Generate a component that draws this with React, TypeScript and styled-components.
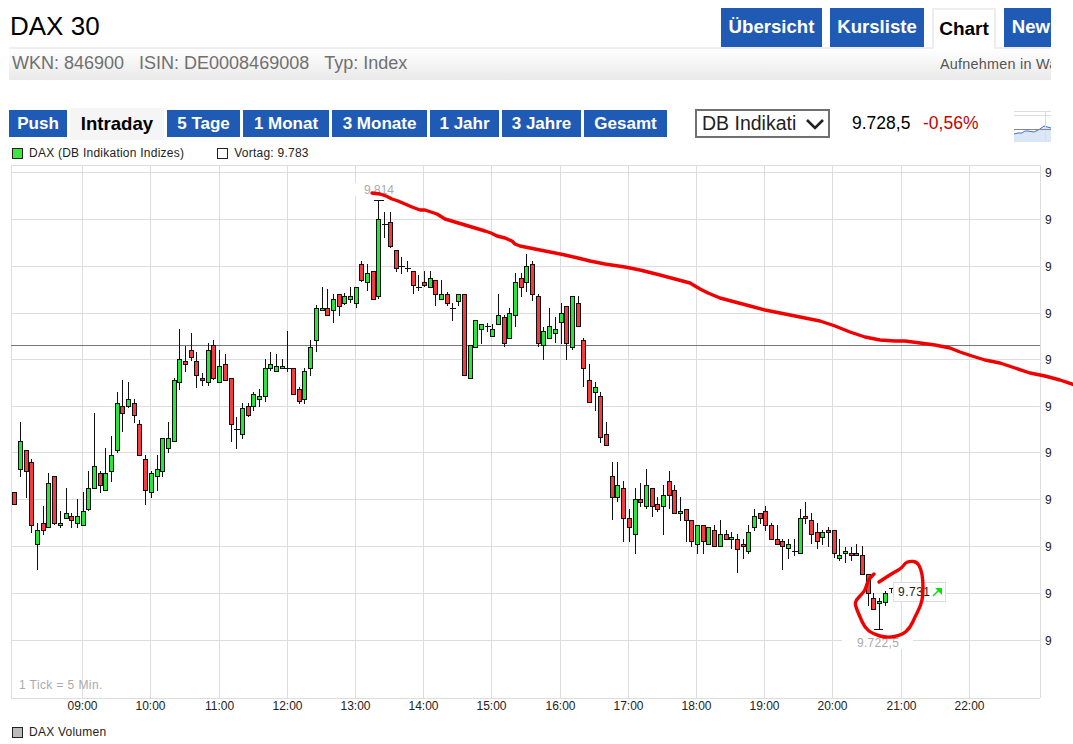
import React from "react";
import styled, { createGlobalStyle } from "styled-components";

const GlobalStyle = createGlobalStyle`
  html, body {
    margin: 0;
    padding: 0;
    height: 744px;
    overflow: hidden;
    background: #fff;
    font-family: "Liberation Sans", Arial, sans-serif;
  }
`;

const Page = styled.div`
  width: 1073px;
  height: 744px;
  overflow: hidden;
`;

const Top = styled.div`
  width: 1042px;
  margin-left: 9px;
  overflow: hidden;
`;

const Header = styled.div`
  display: flex;
  align-items: flex-end;
  height: 47px;
`;

const Title = styled.h1`
  flex: 0 0 711px;
  align-self: flex-start;
  margin: 11px 0 0 1px;
  font-size: 26px;
  line-height: 30px;
  font-weight: 400;
  color: #000;
`;

const TabList = styled.div`
  display: flex;
  flex: none;
  align-items: flex-end;
  gap: 8px;
`;

const Tab = styled.div<{ $active?: boolean; $w: number }>`
  width: ${(p) => p.$w}px;
  height: ${(p) => (p.$active ? 41 : 39)}px;
  box-sizing: border-box;
  flex: none;
  text-align: center;
  font-size: ${(p) => (p.$active ? 19 : 18.6)}px;
  font-weight: 700;
  line-height: 38px;
  white-space: nowrap;
  color: ${(p) => (p.$active ? "#000" : "#fff")};
  background: ${(p) => (p.$active ? "#fff" : "#1f5bb5")};
  border: ${(p) => (p.$active ? "2px solid #eee" : "none")};
  border-bottom: none;
  margin-bottom: ${(p) => (p.$active ? -2 : 0)}px;
  position: relative;
`;

const InfoBar = styled.div`
  display: flex;
  justify-content: space-between;
  align-items: center;
  box-sizing: content-box;
  height: 29px;
  padding: 0 0 2px 3px;
  border-top: 2px solid #eee;
  background: linear-gradient(#fff, #e9e9e9);
`;

const InfoText = styled.span`
  font-size: 18px;
  color: #707070;
  margin-right: 15px;
`;

const WatchLink = styled.span`
  flex: none;
  width: 111px;
  overflow: hidden;
  white-space: nowrap;
  font-size: 14.4px;
  letter-spacing: 0.25px;
  color: #555;
`;

const Controls = styled.div`
  display: flex;
  align-items: center;
  height: 27px;
  margin-top: 30px;
`;

const RangeButton = styled.div<{ $active?: boolean; $w: number }>`
  width: ${(p) => p.$w}px;
  flex: none;
  margin-right: 3px;
  height: ${(p) => (p.$active ? 32 : 27)}px;
  line-height: ${(p) => (p.$active ? 31 : 27)}px;
  text-align: center;
  font-size: ${(p) => (p.$active ? 18.6 : 17)}px;
  font-weight: 700;
  white-space: nowrap;
  color: ${(p) => (p.$active ? "#000" : "#fff")};
  background: ${(p) => (p.$active ? "#f5f5f5" : "#1f5bb5")};
`;

const Market = styled.div`
  display: flex;
  align-items: center;
  justify-content: space-between;
  box-sizing: border-box;
  flex: none;
  width: 135px;
  height: 29px;
  margin-left: 25px;
  padding: 0 3px 0 5px;
  border: 2px solid #707070;
  font-size: 19.5px;
  color: #222;
`;

const Price = styled.span`
  flex: none;
  margin-left: 22px;
  font-size: 17.5px;
  color: #000;
  width: 71px;
`;

const Change = styled.span`
  flex: none;
  font-size: 17.5px;
  color: #c80000;
  width: 91px;
`;

const Legend = styled.div`
  display: flex;
  align-items: center;
  height: 14px;
  margin: 9px 0 0 3px;
  font-size: 12px;
  letter-spacing: 0.24px;
  color: #222;
`;

const Swatch = styled.i<{ $color: string }>`
  width: 9px;
  height: 9px;
  flex: none;
  margin-right: 6px;
  border: 1px solid #222;
  background: ${(p) => p.$color};
`;

const LegendLabel = styled.span`
  margin-right: 33px;
`;

const Plot = styled.svg`
  display: block;
  width: 1073px;
  height: 560px;
`;

const AxisLabel = styled.text<{ $spacing?: number }>`
  font-size: 12px;
  fill: #222;
  letter-spacing: ${(p) => p.$spacing ?? 0}px;
`;

const MutedLabel = styled.text<{ $spacing?: number }>`
  font-size: 12px;
  fill: #aaa;
  letter-spacing: ${(p) => p.$spacing ?? 0}px;
`;

const VolumeLegend = styled(Legend)`
  margin: 5px 0 0 12px;
`;

type Kind = "g" | "r" | "d";
// wick top, body top, body bottom, wick bottom, kind (page y values)
type Candle = [number, number, number, number, Kind];

const candles: Candle[] = [
  [492, 492, 504, 504, "r"], [422, 441, 469, 477, "g"], [450, 450, 471, 498, "r"], [459, 462, 525, 533, "r"],
  [523, 530, 544, 570, "g"], [506, 523, 530, 535, "r"], [473, 483, 527, 527, "g"], [476, 476, 523, 525, "r"],
  [511, 523, 525, 528, "g"], [488, 513, 518, 518, "g"], [513, 516, 520, 528, "r"], [499, 516, 523, 528, "g"],
  [492, 511, 525, 525, "g"], [471, 488, 509, 511, "g"], [413, 466, 488, 488, "g"], [471, 473, 485, 493, "r"],
  [448, 473, 490, 490, "g"], [436, 455, 471, 482, "g"], [392, 403, 450, 453, "g"], [380, 406, 413, 432, "r"],
  [382, 399, 406, 408, "g"], [399, 403, 415, 423, "r"], [420, 424, 455, 455, "r"], [455, 459, 490, 505, "r"],
  [471, 473, 492, 498, "g"], [455, 469, 476, 491, "g"], [438, 438, 471, 477, "g"], [422, 438, 448, 453, "g"],
  [378, 380, 441, 441, "g"], [329, 359, 382, 390, "g"], [346, 361, 364, 372, "r"], [333, 350, 357, 361, "r"],
  [352, 361, 375, 388, "r"], [373, 378, 380, 386, "r"], [343, 350, 382, 386, "g"], [340, 345, 378, 380, "r"],
  [350, 366, 382, 382, "g"], [354, 364, 380, 380, "r"], [378, 378, 424, 442, "r"], [417, 429, 429, 449, "d"],
  [403, 408, 434, 439, "g"], [403, 406, 415, 417, "r"], [392, 394, 406, 411, "g"], [389, 396, 399, 407, "g"],
  [359, 368, 396, 402, "g"], [352, 364, 368, 371, "g"], [354, 366, 371, 371, "g"], [359, 366, 368, 368, "g"],
  [331, 368, 368, 372, "d"], [368, 368, 394, 394, "r"], [387, 389, 401, 404, "r"], [368, 371, 399, 404, "g"],
  [340, 347, 368, 376, "g"], [305, 308, 340, 352, "g"], [287, 308, 310, 310, "g"], [289, 308, 315, 315, "r"],
  [294, 299, 310, 323, "g"], [294, 294, 306, 316, "r"], [293, 296, 303, 305, "g"], [287, 296, 299, 303, "g"],
  [287, 287, 303, 308, "g"], [261, 264, 280, 282, "r"], [264, 273, 282, 291, "g"], [271, 271, 299, 299, "r"],
  [200, 219, 296, 299, "g"], [212, 224, 224, 238, "d"], [212, 222, 246, 248, "r"], [250, 250, 268, 272, "r"],
  [257, 266, 266, 274, "d"], [261, 268, 268, 272, "d"], [271, 271, 285, 294, "r"], [275, 287, 287, 291, "d"],
  [271, 282, 285, 287, "r"], [271, 278, 287, 287, "g"], [280, 280, 294, 306, "r"], [280, 294, 299, 299, "g"],
  [292, 294, 303, 306, "r"], [303, 308, 308, 321, "d"], [294, 294, 301, 306, "g"], [294, 294, 375, 375, "r"],
  [345, 345, 378, 378, "g"], [320, 320, 347, 347, "g"], [324, 324, 329, 344, "g"], [323, 326, 326, 332, "d"],
  [324, 329, 336, 336, "g"], [294, 315, 324, 324, "g"], [315, 317, 343, 347, "r"], [308, 313, 338, 338, "g"],
  [273, 282, 315, 327, "g"], [273, 278, 287, 297, "r"], [254, 266, 282, 292, "g"], [261, 264, 294, 301, "r"],
  [294, 296, 343, 347, "r"], [327, 331, 345, 360, "g"], [308, 326, 338, 338, "g"], [317, 329, 333, 343, "g"],
  [303, 313, 322, 344, "g"], [306, 306, 343, 360, "r"], [296, 296, 347, 350, "g"], [296, 303, 326, 326, "r"],
  [338, 340, 368, 387, "r"], [364, 380, 402, 402, "r"], [382, 387, 392, 411, "g"], [392, 396, 437, 443, "r"],
  [422, 434, 445, 445, "r"], [462, 476, 497, 520, "r"], [462, 485, 497, 502, "g"], [481, 488, 518, 542, "r"],
  [509, 518, 527, 542, "r"], [488, 499, 534, 554, "g"], [483, 499, 502, 507, "r"], [469, 485, 506, 509, "g"],
  [488, 488, 506, 517, "r"], [497, 504, 509, 512, "r"], [485, 495, 506, 535, "g"], [471, 481, 495, 509, "r"],
  [485, 490, 513, 513, "r"], [497, 511, 513, 521, "g"], [509, 509, 520, 542, "r"], [520, 520, 541, 547, "r"],
  [525, 525, 544, 554, "g"], [525, 525, 541, 554, "r"], [527, 527, 544, 544, "g"], [525, 530, 546, 546, "r"],
  [520, 534, 546, 546, "g"], [530, 534, 539, 539, "r"], [532, 537, 539, 549, "g"], [534, 539, 549, 573, "r"],
  [539, 544, 546, 559, "r"], [525, 532, 551, 554, "g"], [509, 516, 527, 531, "g"], [513, 513, 518, 524, "r"],
  [506, 511, 525, 531, "r"], [523, 525, 539, 539, "r"], [525, 539, 544, 544, "r"], [539, 541, 546, 570, "r"],
  [539, 544, 548, 559, "g"], [539, 551, 551, 556, "d"], [509, 518, 553, 553, "g"], [502, 516, 518, 524, "r"],
  [513, 520, 534, 544, "r"], [523, 532, 541, 549, "r"], [530, 532, 537, 545, "g"], [527, 530, 532, 547, "r"],
  [530, 530, 553, 558, "r"], [539, 555, 558, 561, "g"], [547, 551, 553, 563, "g"], [547, 553, 555, 561, "r"],
  [544, 553, 555, 555, "r"], [546, 555, 574, 574, "r"], [574, 574, 593, 606, "r"], [593, 598, 609, 609, "r"],
  [598, 601, 603, 629, "g"], [591, 593, 602, 606, "g"], [588, 588, 588, 593, "d"],
];

const candleX = (i: number) => Math.round(14.3 + 5.69 * i);

const vLines = [11, 82, 150, 219, 287, 355, 423, 491, 560, 628, 696, 764, 832, 901, 969, 1040];
const hLines = [172, 219, 266, 313, 359, 406, 452, 499, 546, 593, 640];
const hours = ["09:00", "10:00", "11:00", "12:00", "13:00", "14:00", "15:00", "16:00", "17:00", "18:00", "19:00", "20:00", "21:00", "22:00"];

const trendLine =
  "372,193 380,194 386,196 392,199 398,201 405,204 412,207 420,210 425,210 431,212 437,214 445,219 455,222 465,225 475,228 485,231 491,233 497,236 505,238 512,241 515,244 520,246 530,248 540,250 550,252 565,255 578,258 590,261 605,264 625,267 640,270 660,275 675,279 690,283 700,289 708,293 720,298 735,302 750,306 765,310 780,313 800,317 820,321 835,326 850,332 865,337 880,340 895,341 905,341 920,343 935,345 950,348 960,352 972,356 985,360 1000,363 1015,368 1030,373 1045,376 1060,380 1075,385";

const circleLine = [
  [879, 582], [885, 578], [893, 573], [902, 568], [905, 563], [910, 561], [917, 562], [921, 569], [923, 580],
  [923, 595], [921, 605], [915, 617], [910, 628], [902, 635], [887, 638], [873, 634], [865, 628], [860, 617],
  [855, 605], [856, 600], [863, 593], [866, 588], [868, 580], [874, 574],
];

// rounds the hand drawn stroke through the midpoints of its segments
const smoothPath = (pts: number[][]) => {
  let d = `M${pts[0][0]} ${pts[0][1]}`;
  for (let i = 1; i < pts.length - 1; i++) {
    const mx = (pts[i][0] + pts[i + 1][0]) / 2;
    const my = (pts[i][1] + pts[i + 1][1]) / 2;
    d += ` Q${pts[i][0]} ${pts[i][1]} ${mx} ${my}`;
  }
  const last = pts[pts.length - 1];
  return `${d} L${last[0]} ${last[1]}`;
};

const CandleMark: React.FC<{ candle: Candle; index: number }> = ({ candle, index }) => {
  const [wickTop, bodyTop, bodyBottom, wickBottom, kind] = candle;
  const x = candleX(index) + 0.5;
  return (
    <g stroke="#111" strokeWidth={1} shapeRendering="crispEdges">
      <line x1={x} x2={x} y1={wickTop} y2={wickBottom} />
      {kind === "d" ? (
        <line x1={x - 3} x2={x + 3} y1={bodyTop + 0.5} y2={bodyTop + 0.5} />
      ) : (
        <rect
          x={x - 2}
          y={bodyTop + 0.5}
          width={4}
          height={bodyBottom - bodyTop}
          fill={kind === "g" ? "#26e63a" : "#f23c3f"}
        />
      )}
    </g>
  );
};

const Chart: React.FC = () => (
  <Plot viewBox="0 160 1073 560">
    <g stroke="#ddd" strokeWidth={1} shapeRendering="crispEdges">
      {vLines.map((x) => (
        <line key={x} x1={x + 0.5} x2={x + 0.5} y1={165} y2={698} />
      ))}
      {hLines.map((y) => (
        <line key={y} x1={11} x2={1040} y1={y + 0.5} y2={y + 0.5} />
      ))}
      <line x1={11} x2={1040} y1={165.5} y2={165.5} />
      <line x1={11} x2={1040} y1={698.5} y2={698.5} />
    </g>

    <rect x={352} y={183} width={50} height={13} fill="#fff" />
    <rect x={842} y={636} width={71} height={13} fill="#fff" />
    <line x1={11} x2={1040} y1={345.5} y2={345.5} stroke="#777" shapeRendering="crispEdges" />

    {candles.map((c, i) => (
      <CandleMark key={i} candle={c} index={i} />
    ))}
    <g stroke="#111" shapeRendering="crispEdges">
      <line x1={374} x2={384} y1={200.5} y2={200.5} />
      <line x1={874} x2={883} y1={629.5} y2={629.5} />
    </g>

    <MutedLabel x={364} y={194}>9.814</MutedLabel>
    <MutedLabel x={857} y={647} $spacing={0.3}>9.722,5</MutedLabel>
    <MutedLabel x={19} y={689} $spacing={0.4}>1 Tick = 5 Min.</MutedLabel>

    {hLines.map((y) => (
      <AxisLabel key={y} x={1045} y={y + 5}>9</AxisLabel>
    ))}
    {hours.map((h, i) => (
      <AxisLabel key={h} x={vLines[i + 1] + 0.5} y={710} textAnchor="middle">{h}</AxisLabel>
    ))}

    <rect x={893.5} y={582.5} width={52} height={19} fill="#fff" stroke="#ddd" shapeRendering="crispEdges" />
    <AxisLabel x={898} y={596} $spacing={0.5}>9.731</AxisLabel>
    <path d="M933 596 L940 589" stroke="#00e600" strokeWidth={1.4} />
    <path d="M935 588 H942 V595 Z" fill="#00e600" />

    <g fill="none" stroke="#f20000" strokeWidth={3.4} strokeLinecap="round" strokeLinejoin="round">
      <polyline points={trendLine} />
      <path d={smoothPath(circleLine)} />
    </g>
  </Plot>
);

const Thumbnail: React.FC = () => (
  <svg width={37} height={31} viewBox="0 0 37 31" style={{ marginTop: 5, flex: "none" }}>
    <rect x={0} y={0} width={37} height={31} fill="#fff" />
    <path d="M0 23 L8 22 L14 20 L20 21 L26 18 L30 15 L37 17 V31 H0 Z" fill="#dbe6f7" />
    <path d="M0 23 L4 22 L8 22 L11 20 L14 20 L20 21 L26 18 L30 15 L37 17" fill="none" stroke="#3b6fc4" strokeWidth={1} />
    <path d="M0 0.5 H37 M0 4.5 H37 M31.5 0 V31" stroke="#ddd" strokeWidth={1} fill="none" />
    <path d="M0 18.5 H37" stroke="#888" strokeWidth={1} />
  </svg>
);

const tabs = [
  { label: "Übersicht", w: 101 },
  { label: "Kursliste", w: 94 },
  { label: "Chart", w: 64, active: true },
  { label: "News", w: 64 },
];

const ranges = [
  { label: "Push", w: 58 },
  { label: "Intraday", w: 94, active: true },
  { label: "5 Tage", w: 73 },
  { label: "1 Monat", w: 86 },
  { label: "3 Monate", w: 95 },
  { label: "1 Jahr", w: 69 },
  { label: "3 Jahre", w: 79 },
  { label: "Gesamt", w: 83 },
];

const App: React.FC = () => (
  <Page>
    <GlobalStyle />
    <Top>
      <Header>
        <Title>DAX 30</Title>
        <TabList>
          {tabs.map((t) => (
            <Tab key={t.label} $w={t.w} $active={t.active}>{t.label}</Tab>
          ))}
        </TabList>
      </Header>
      <InfoBar>
        <div>
          <InfoText>WKN: 846900</InfoText>
          <InfoText>ISIN: DE0008469008</InfoText>
          <InfoText>Typ: Index</InfoText>
        </div>
        <WatchLink>Aufnehmen in Watchlist</WatchLink>
      </InfoBar>
      <Controls>
        {ranges.map((r) => (
          <RangeButton key={r.label} $w={r.w} $active={r.active}>{r.label}</RangeButton>
        ))}
        <Market>
          DB Indikati
          <svg width={20} height={12} viewBox="0 0 20 12">
            <path d="M2 2 L10 10 L18 2" fill="none" stroke="#222" strokeWidth={2.6} />
          </svg>
        </Market>
        <Price>9.728,5</Price>
        <Change>-0,56%</Change>
        <Thumbnail />
      </Controls>
      <Legend>
        <Swatch $color="#3fe63f" />
        <LegendLabel>DAX (DB Indikation Indizes)</LegendLabel>
        <Swatch $color="#fff" />
        <span>Vortag: 9.783</span>
      </Legend>
    </Top>
    <Chart />
    <VolumeLegend>
      <Swatch $color="#bbb" />
      <span>DAX Volumen</span>
    </VolumeLegend>
  </Page>
);

export default App;
